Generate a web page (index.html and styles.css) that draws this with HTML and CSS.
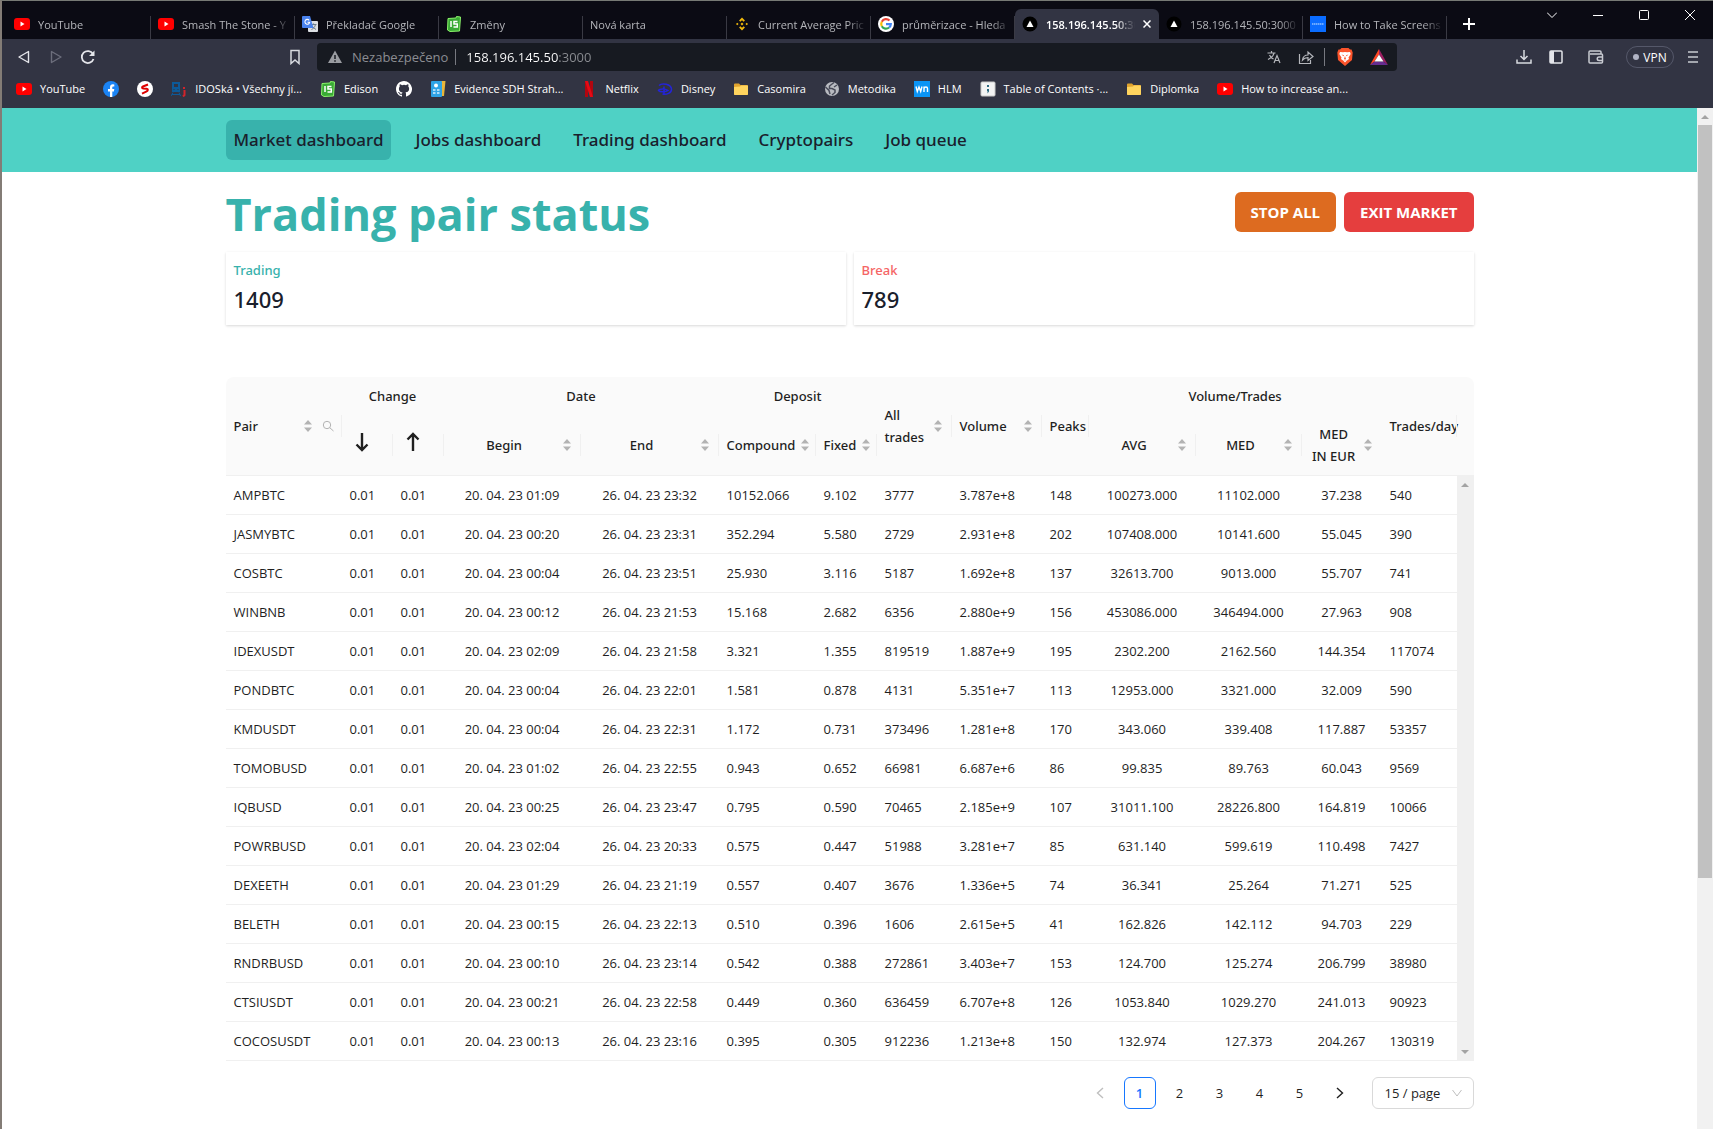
FILE: index.html
```html
<!DOCTYPE html>
<html lang="en">
<head>
<meta charset="utf-8">
<title>Trading pair status</title>
<link rel="stylesheet" href="styles.css">
</head>
<body>
<svg class="defs" aria-hidden="true">
  <symbol id="yt" viewBox="0 0 16 16"><rect x="0" y="2" width="16" height="12" rx="3" fill="#f00"/><path d="M6.500 5.500v5l4-2.500z" fill="#fff"/></symbol>
  <symbol id="edison" viewBox="0 0 16 16"><path d="M2 2.500 10 2l.5-1.500 4 .5-1 14L4 15.500 1.500 14z" fill="#3aaa35" stroke="#8bf36b"/><path d="M5 5v6M11.500 5.500H8v2.500h3.300v3H7.500" fill="none" stroke="#fff" stroke-width="1.500"/></symbol>
  <symbol id="vercel" viewBox="0 0 16 16"><circle cx="8" cy="8" r="7.500" fill="#000"/><path d="M8 4.500 11.500 11h-7z" fill="#fff"/></symbol>
  <symbol id="folder" viewBox="0 0 16 16"><path d="M1 3.500a1 1 0 0 1 1-1h4l1.500 1.500H14a1 1 0 0 1 1 1v8a1 1 0 0 1-1 1H2a1 1 0 0 1-1-1z" fill="#e0a32e"/><path d="M1 6 7 5.500 8 4.500h6.500L15 5v8a1 1 0 0 1-1 1H2a1 1 0 0 1-1-1z" fill="#ffd45e"/></symbol>
  <symbol id="sort" viewBox="0 0 12 12"><path d="M6 0 10 4.500H2zM2 7.500h8L6 12z" fill="#b3b3b3"/></symbol>
</svg>

<header class="browser">
  <div class="tabs">
    <button class="tab"><svg class="ico"><use href="#yt"/></svg><span>YouTube</span></button>
    <button class="tab"><svg class="ico"><use href="#yt"/></svg><span>Smash The Stone - Y</span></button>
    <button class="tab"><svg class="ico" viewBox="0 0 16 16"><rect x="6" y="5" width="10" height="11" rx="1" fill="#dcdfe4"/><path d="M8.500 8.500h6M11.500 7.500v1M13.500 8.500c-.5 2.500-2 4-4 5M10 10.500l4 3" fill="none" stroke="#6b7c8c"/><path d="M1 0h7l3.500 12H1a1 1 0 0 1-1-1V1a1 1 0 0 1 1-1z" fill="#4a83ee"/><path d="M7.200 4.300A2.400 2.400 0 1 0 7.700 6.200H5.500" fill="none" stroke="#fff" stroke-width="1.100"/></svg><span>Překladač Google</span></button>
    <button class="tab"><svg class="ico"><use href="#edison"/></svg><span>Změny</span></button>
    <button class="tab"><span>Nová karta</span></button>
    <button class="tab"><svg class="ico" viewBox="3 3 10 10"><path d="M8 3l2.300 2.300-1 1L8 5 6.700 6.300l-1-1zM8 13l2.300-2.300-1-1L8 11 6.700 9.700l-1 1zM4.300 7l1 1-1 1-1-1zM11.700 7l1 1-1 1-1-1zM8 6.800 9.200 8 8 9.200 6.800 8z" fill="#f0b90b" transform="translate(1.600 1.600) scale(.8)"/></svg><span>Current Average Pric</span></button>
    <button class="tab"><svg class="ico" viewBox="0 0 16 16"><circle cx="8" cy="8" r="8" fill="#fff"/><g fill="none" stroke-width="2.200"><path d="M11.500 4.600A4.800 4.800 0 0 0 3.800 5.700" stroke="#ea4335"/><path d="M3.800 5.700a4.800 4.800 0 0 0 0 4.600" stroke="#fbbc05"/><path d="M3.800 10.300a4.800 4.800 0 0 0 7.300 1.200" stroke="#34a853"/><path d="M11.100 11.500A4.500 4.500 0 0 0 12.800 8.200H8" stroke="#4285f4"/></g></svg><span>průměrizace - Hleda</span></button>
    <button class="tab active"><svg class="ico"><use href="#vercel"/></svg><span>158.196.145.50:30</span><svg class="x" viewBox="0 0 8 8"><path d="M.5.5l7 7M7.500.5l-7 7" stroke="#fff" stroke-width="1.500"/></svg></button>
    <button class="tab"><svg class="ico"><use href="#vercel"/></svg><span>158.196.145.50:3000</span></button>
    <button class="tab"><svg class="ico" viewBox="0 0 16 16"><path d="M0 0h16v16H0z" fill="#0a6cff"/><path d="M2 8h12" stroke="#8fbfff" stroke-width="1.500" stroke-dasharray="1.500 .5"/></svg><span>How to Take Screens</span></button>
    <button class="new-tab" aria-label="New tab"><svg viewBox="0 0 12 12"><path d="M6 0v12M0 6h12" stroke="#fff" stroke-width="2"/></svg></button>
    <div class="window">
      <button aria-label="Search tabs"><svg viewBox="0 0 10 10"><path d="M0 2.500l5 5 5-5" /></svg></button>
      <button aria-label="Minimize"><svg viewBox="0 0 10 10"><path d="M0 5.500h10"/></svg></button>
      <button aria-label="Maximize"><svg viewBox="0 0 10 10"><rect x=".5" y=".5" width="9" height="9" rx="1"/></svg></button>
      <button aria-label="Close"><svg viewBox="0 0 10 10"><path d="M0 0l10 10M10 0L0 10"/></svg></button>
    </div>
  </div>

  <div class="toolbar">
    <div class="history">
      <button aria-label="Back"><svg class="ico" viewBox="0 0 16 16"><path d="M12.500 2.500v11L3 8z" fill="none" stroke="#e4e5ea" stroke-width="1.400" stroke-linejoin="round"/></svg></button>
      <button aria-label="Forward"><svg class="ico" viewBox="0 0 16 16"><path d="M3.500 2.500v11L13 8z" fill="none" stroke="#6c6e7c" stroke-width="1.400" stroke-linejoin="round"/></svg></button>
      <button aria-label="Reload"><svg class="ico" viewBox="0 0 16 16"><path d="M13.500 10A6 6 0 1 1 13 5" fill="none" stroke="#e4e5ea" stroke-width="1.800"/><path d="M14.500 1.500v5.500H9z" fill="#e4e5ea"/></svg></button>
    </div>
    <button class="mark" aria-label="Bookmark"><svg class="ico" viewBox="0 0 16 16"><path d="M4 1.500h8v13l-4-3.500-4 3.500z" fill="none" stroke="#d8dae0" stroke-width="1.500"/></svg></button>
    <div class="address">
      <svg class="ico" viewBox="0 0 16 16"><path d="M8 1.500 15 14H1z" fill="#9a9ca1"/><path d="M8 6v4M8 11.200v1.500" stroke="#171a21" stroke-width="1.500"/></svg>
      <span class="insecure">Nezabezpečeno</span>
      <input class="url" aria-label="Address" value="158.196.145.50:3000">
      <button aria-label="Translate"><svg class="ico" viewBox="0 0 16 16"><path d="M1.500 4h8M5.500 2v2M8 4c-.5 3-3 5-6 6.500M3.500 6c1 2 2.500 3.200 4 4M8 14l3-7.500 3 7.500M9 11.500h4" fill="none" stroke="#b4b6bb" stroke-width="1.200"/></svg></button>
      <button aria-label="Share"><svg class="ico" viewBox="0 0 16 16"><path d="M1.500 5v9.500h11V11M4.500 11c.5-3.500 2.500-5 5.500-5V3l5 4.500-5 4V8.700c-2.500 0-4 .5-5.500 2.300z" fill="none" stroke="#b4b6bb" stroke-width="1.200"/></svg></button>
      <div class="shields">
        <button aria-label="Brave Shields"><svg viewBox="0 0 16 18"><path d="M4.500 0h7l1.500 1.500 1.500 0 1.200 3-.7 7.500L8 18l-7-6L.3 4.500l1.200-3H3z" fill="#fb542b"/><path d="M3 4l3 .3L8 4l2 .3L13 4l.7 2-2.200 3.500.5 1.500-2.500 1.800L8 14.500l-1.500-1.700L4 11l.5-1.500L2.300 6z" fill="#fff"/><path d="M4.500 6.500l2.500.8-.5 1zM11.500 6.500 9 7.300l.5 1zM8 8l-1 3 1 .5 1-.5zM6.500 12.200 8 11.700l1.500.5" fill="#fb542b"/></svg></button>
        <button aria-label="Rewards"><svg viewBox="0 0 18 16"><path d="M9 0v5.500L4.500 12.500 0 16z" fill="#ff4724"/><path d="M9 0v5.500l4.500 7L18 16z" fill="#9e1f63"/><path d="M0 16l4.500-3.500h9L18 16z" fill="#662d91"/><path d="M9 5.500l4.500 7h-9z" fill="#fff"/></svg></button>
      </div>
    </div>
    <div class="actions">
      <button aria-label="Downloads"><svg class="ico" viewBox="0 0 16 16"><path d="M8 1v9M4.500 7 8 10.500 11.500 7M1 10.500V14h14v-3.500" fill="none" stroke="#d8dae0" stroke-width="1.500"/></svg></button>
      <button aria-label="Sidebar"><svg class="ico" viewBox="0 0 16 16"><rect x="2" y="2" width="12" height="12" rx="1" fill="none" stroke="#e4e5ea" stroke-width="1.500"/><path d="M2 2h4v12H2z" fill="#e4e5ea"/></svg></button>
      <button class="wallet" aria-label="Wallet"><svg class="ico" viewBox="0 0 16 16"><path d="M13 5V3a1 1 0 0 0-1-1H2a1 1 0 0 0-1 1v10a1 1 0 0 0 1 1h11.500a1 1 0 0 0 1-1V6a1 1 0 0 0-1-1H2M15 8h-4a1.500 1.500 0 0 0 0 3.500h4" fill="none" stroke="#c9cbd2" stroke-width="1.500"/></svg></button>
      <button class="vpn"><i></i>VPN</button>
      <button aria-label="Menu"><svg class="ico" viewBox="0 0 16 16"><path d="M3 3h10M3 8h10M3 13h10" stroke="#c9cbd2" stroke-width="1.700"/></svg></button>
    </div>
  </div>

  <nav class="bookmarks" aria-label="Bookmarks">
    <a href="#"><svg class="ico"><use href="#yt"/></svg>YouTube</a>
    <a href="#" aria-label="Facebook"><svg class="ico" viewBox="0 0 16 16"><circle cx="8" cy="8" r="8" fill="#1b84f5"/><path d="M7 16v-5.500H5V8h2V6.300C7 4.300 8.200 3.300 9.800 3.300l1.500.1v2.100h-.9c-.9 0-1.100.5-1.100 1V8h2l-.4 2.500H9.300V16z" fill="#fff"/></svg></a>
    <a href="#" aria-label="Seznam"><svg class="ico" viewBox="0 0 16 16"><circle cx="8" cy="8" r="8" fill="#fff"/><path d="M11 3.500 6 5.500c-1.500.8-1 2 .2 2l3.300.2c2 .3 1.700 2-.3 3L5 12.700" fill="none" stroke="#d00" stroke-width="2"/></svg></a>
    <a href="#"><svg class="ico" viewBox="0 0 16 16"><path d="M1 1h8v10H1zM3 3v3h4V3zM2.500 8v1h1V8zM6.500 8v1h1V8z" fill="#0d5a99" fill-rule="evenodd"/><path d="M2 11.500 0 15M8 11.500l1.500 3.500M1 13.500h8" stroke="#0d5a99"/><path d="M13 6v2M13.500 9v5l-1.500 1.500" stroke="#d2232a" stroke-width="2" fill="none"/></svg>IDOSká • Všechny jí...</a>
    <a href="#"><svg class="ico"><use href="#edison"/></svg>Edison</a>
    <a href="#" aria-label="GitHub"><svg class="ico" viewBox="0 0 16 16"><path fill="#fff" d="M8 0C3.580 0 0 3.580 0 8c0 3.540 2.290 6.530 5.470 7.590.4.070.55-.17.55-.38 0-.19-.01-.82-.01-1.490-2.010.37-2.530-.49-2.690-.94-.09-.23-.48-.94-.82-1.130-.28-.15-.68-.52-.01-.53.63-.01 1.080.58 1.230.82.72 1.210 1.870.87 2.330.66.07-.52.28-.87.51-1.070-1.780-.2-3.640-.89-3.640-3.950 0-.87.31-1.590.82-2.150-.08-.2-.36-1.020.08-2.120 0 0 .67-.21 2.200.82a7.600 7.600 0 0 1 4 0c1.530-1.040 2.200-.82 2.200-.82.44 1.100.16 1.920.08 2.120.51.56.82 1.270.82 2.150 0 3.070-1.870 3.750-3.650 3.950.29.25.54.73.54 1.480 0 1.070-.01 1.930-.01 2.200 0 .21.150.46.55.38A8 8 0 0 0 8 0z"/></svg></a>
    <a href="#"><svg class="ico" viewBox="0 0 16 16"><path d="M11 0h4.500L14 15h-3z" fill="#e8b63a"/><rect x="1" y="0" width="11" height="16" rx="1" fill="#2ea3e6"/><circle cx="6" cy="4.500" r="2" fill="#fff"/><path d="M3 9h2.500M7 9h2.500M3 12h2.500M7 12h2.500" stroke="#d5efff" stroke-width="1.500"/></svg>Evidence SDH Strah...</a>
    <a href="#"><svg class="ico" viewBox="0 0 16 16"><path d="M4 0h3v16H4zM9 0h3v16H9z" fill="#b1060f"/><path d="M4 0h3l5 16H9z" fill="#e50914"/></svg>Netflix</a>
    <a href="#"><svg class="ico" viewBox="0 0 16 16"><path d="M2 4.500C5 1.500 14 3 14.500 8c.3 4-5 6-9 5M7 5.500v8M1.500 9.500c1-2 7-2 9.500 0-2 1.500-8 2-9.500 0z" fill="none" stroke="#2424d8" stroke-width="1.500"/></svg>Disney</a>
    <a href="#"><svg class="ico"><use href="#folder"/></svg>Casomira</a>
    <a href="#"><svg class="ico" viewBox="0 0 16 16"><circle cx="8" cy="8" r="7" fill="#b9bbc1"/><path d="M10 1.500 5.500 5v2.500H8l3 1.500v2.500L8 14M1.500 6 5 9.500 6 13M13 4l-3 2" fill="none" stroke="#4a4c5a" stroke-width="1.500"/></svg>Metodika</a>
    <a href="#"><svg class="ico" viewBox="0 0 16 16"><path d="M0 0h16v16H0z" fill="#0b94f5"/><path d="M2 5.500 3.300 10.500 5 6l1.700 4.500L8 5.500M10 11V5.500M10 7.500c.5-2 3.500-2 3.500 0V11" fill="none" stroke="#fff" stroke-width="1.400"/></svg>HLM</a>
    <a href="#"><svg class="ico" viewBox="0 0 16 16"><rect x="1" y="1" width="14" height="14" rx="1" fill="#f3f3f3" stroke="#c9c9c9"/><path d="M7 4h2v2H7zM7 8h2v2.500L7.500 12.500V10H7z" fill="#2c6a80"/></svg>Table of Contents ·...</a>
    <a href="#"><svg class="ico"><use href="#folder"/></svg>Diplomka</a>
    <a href="#"><svg class="ico"><use href="#yt"/></svg>How to increase an...</a>
  </nav>
</header>

<div class="viewport">
  <div class="page">
    <nav class="site-nav">
      <div class="container">
        <a class="current" href="#">Market dashboard</a>
        <a href="#">Jobs dashboard</a>
        <a href="#">Trading dashboard</a>
        <a href="#">Cryptopairs</a>
        <a href="#">Job queue</a>
      </div>
    </nav>
    <main class="container">
      <div class="title-row">
        <h1>Trading pair status</h1>
        <div class="buttons">
          <button class="stop">STOP ALL</button>
          <button class="exit">EXIT MARKET</button>
        </div>
      </div>
      <dl class="stats">
        <div class="stat trading"><dt>Trading</dt><dd>1409</dd></div>
        <div class="stat break"><dt>Break</dt><dd>789</dd></div>
      </dl>

      <div class="table-wrap">
        <table>
          <colgroup><col class="c116"><col class="c51"><col class="c51"><col class="c137"><col class="c138"><col class="c97"><col class="c61"><col class="c75"><col class="c90"><col class="c47"><col class="c107"><col class="c106"><col class="c80"><col></colgroup>
          <thead>
            <tr>
              <th rowspan="2" class="sep"><div class="head"><span>Pair</span><svg class="sort"><use href="#sort"/></svg><button class="search" aria-label="Search pair"><svg viewBox="0 0 12 12"><circle cx="5" cy="5" r="3.700"/><path d="M7.700 7.700 11.500 11"/></svg></button></div></th>
              <th colspan="2">Change</th>
              <th colspan="2">Date</th>
              <th colspan="2">Deposit</th>
              <th rowspan="2" class="sep"><div class="head"><span>All trades</span><svg class="sort"><use href="#sort"/></svg></div></th>
              <th rowspan="2" class="sep"><div class="head"><span>Volume</span><svg class="sort"><use href="#sort"/></svg></div></th>
              <th rowspan="2" class="sep"><div class="head"><span>Peaks</span></div></th>
              <th colspan="3">Volume/Trades</th>
              <th rowspan="2" class="sep"><div class="head"><span>Trades/day</span></div></th>
            </tr>
            <tr class="sub">
              <th class="sep"><div class="head"><svg class="arrow" role="img" aria-label="Down" viewBox="0 0 24 24"><path d="M12 3v17M6.500 14.500 12 20l5.500-5.500"/></svg></div></th>
              <th class="sep"><div class="head"><svg class="arrow" role="img" aria-label="Up" viewBox="0 0 24 24"><path d="M12 21V4M6.500 9.500 12 4l5.500 5.500"/></svg></div></th>
              <th class="sep"><div class="head mid"><span>Begin</span><svg class="sort"><use href="#sort"/></svg></div></th>
              <th class="sep"><div class="head mid"><span>End</span><svg class="sort"><use href="#sort"/></svg></div></th>
              <th class="sep"><div class="head"><span>Compound</span><svg class="sort"><use href="#sort"/></svg></div></th>
              <th class="sep"><div class="head"><span>Fixed</span><svg class="sort"><use href="#sort"/></svg></div></th>
              <th class="sep"><div class="head mid"><span>AVG</span><svg class="sort"><use href="#sort"/></svg></div></th>
              <th class="sep"><div class="head mid"><span>MED</span><svg class="sort"><use href="#sort"/></svg></div></th>
              <th><div class="head mid"><span>MED IN&nbsp;EUR</span><svg class="sort"><use href="#sort"/></svg></div></th>
            </tr>
          </thead>
          <tbody>
            <tr><td>AMPBTC</td><td>0.01</td><td>0.01</td><td>20. 04. 23 01:09</td><td>26. 04. 23 23:32</td><td>10152.066</td><td>9.102</td><td>3777</td><td>3.787e+8</td><td>148</td><td>100273.000</td><td>11102.000</td><td>37.238</td><td>540</td></tr>
            <tr><td>JASMYBTC</td><td>0.01</td><td>0.01</td><td>20. 04. 23 00:20</td><td>26. 04. 23 23:31</td><td>352.294</td><td>5.580</td><td>2729</td><td>2.931e+8</td><td>202</td><td>107408.000</td><td>10141.600</td><td>55.045</td><td>390</td></tr>
            <tr><td>COSBTC</td><td>0.01</td><td>0.01</td><td>20. 04. 23 00:04</td><td>26. 04. 23 23:51</td><td>25.930</td><td>3.116</td><td>5187</td><td>1.692e+8</td><td>137</td><td>32613.700</td><td>9013.000</td><td>55.707</td><td>741</td></tr>
            <tr><td>WINBNB</td><td>0.01</td><td>0.01</td><td>20. 04. 23 00:12</td><td>26. 04. 23 21:53</td><td>15.168</td><td>2.682</td><td>6356</td><td>2.880e+9</td><td>156</td><td>453086.000</td><td>346494.000</td><td>27.963</td><td>908</td></tr>
            <tr><td>IDEXUSDT</td><td>0.01</td><td>0.01</td><td>20. 04. 23 02:09</td><td>26. 04. 23 21:58</td><td>3.321</td><td>1.355</td><td>819519</td><td>1.887e+9</td><td>195</td><td>2302.200</td><td>2162.560</td><td>144.354</td><td>117074</td></tr>
            <tr><td>PONDBTC</td><td>0.01</td><td>0.01</td><td>20. 04. 23 00:04</td><td>26. 04. 23 22:01</td><td>1.581</td><td>0.878</td><td>4131</td><td>5.351e+7</td><td>113</td><td>12953.000</td><td>3321.000</td><td>32.009</td><td>590</td></tr>
            <tr><td>KMDUSDT</td><td>0.01</td><td>0.01</td><td>20. 04. 23 00:04</td><td>26. 04. 23 22:31</td><td>1.172</td><td>0.731</td><td>373496</td><td>1.281e+8</td><td>170</td><td>343.060</td><td>339.408</td><td>117.887</td><td>53357</td></tr>
            <tr><td>TOMOBUSD</td><td>0.01</td><td>0.01</td><td>20. 04. 23 01:02</td><td>26. 04. 23 22:55</td><td>0.943</td><td>0.652</td><td>66981</td><td>6.687e+6</td><td>86</td><td>99.835</td><td>89.763</td><td>60.043</td><td>9569</td></tr>
            <tr><td>IQBUSD</td><td>0.01</td><td>0.01</td><td>20. 04. 23 00:25</td><td>26. 04. 23 23:47</td><td>0.795</td><td>0.590</td><td>70465</td><td>2.185e+9</td><td>107</td><td>31011.100</td><td>28226.800</td><td>164.819</td><td>10066</td></tr>
            <tr><td>POWRBUSD</td><td>0.01</td><td>0.01</td><td>20. 04. 23 02:04</td><td>26. 04. 23 20:33</td><td>0.575</td><td>0.447</td><td>51988</td><td>3.281e+7</td><td>85</td><td>631.140</td><td>599.619</td><td>110.498</td><td>7427</td></tr>
            <tr><td>DEXEETH</td><td>0.01</td><td>0.01</td><td>20. 04. 23 01:29</td><td>26. 04. 23 21:19</td><td>0.557</td><td>0.407</td><td>3676</td><td>1.336e+5</td><td>74</td><td>36.341</td><td>25.264</td><td>71.271</td><td>525</td></tr>
            <tr><td>BELETH</td><td>0.01</td><td>0.01</td><td>20. 04. 23 00:15</td><td>26. 04. 23 22:13</td><td>0.510</td><td>0.396</td><td>1606</td><td>2.615e+5</td><td>41</td><td>162.826</td><td>142.112</td><td>94.703</td><td>229</td></tr>
            <tr><td>RNDRBUSD</td><td>0.01</td><td>0.01</td><td>20. 04. 23 00:10</td><td>26. 04. 23 23:14</td><td>0.542</td><td>0.388</td><td>272861</td><td>3.403e+7</td><td>153</td><td>124.700</td><td>125.274</td><td>206.799</td><td>38980</td></tr>
            <tr><td>CTSIUSDT</td><td>0.01</td><td>0.01</td><td>20. 04. 23 00:21</td><td>26. 04. 23 22:58</td><td>0.449</td><td>0.360</td><td>636459</td><td>6.707e+8</td><td>126</td><td>1053.840</td><td>1029.270</td><td>241.013</td><td>90923</td></tr>
            <tr><td>COCOSUSDT</td><td>0.01</td><td>0.01</td><td>20. 04. 23 00:13</td><td>26. 04. 23 23:16</td><td>0.395</td><td>0.305</td><td>912236</td><td>1.213e+8</td><td>150</td><td>132.974</td><td>127.373</td><td>204.267</td><td>130319</td></tr>
          </tbody>
        </table>
        <div class="gutter" aria-hidden="true">
          <div class="gutter-head"></div>
          <div class="track"><svg viewBox="0 0 8 4"><path d="M4 0l4 4H0z"/></svg><svg viewBox="0 0 8 4"><path d="M0 0h8L4 4z"/></svg></div>
        </div>
      </div>

      <div class="pagination">
        <button class="page-btn" disabled aria-label="Previous page"><svg viewBox="0 0 8 12"><path d="M7 1 1.500 6 7 11"/></svg></button>
        <button class="page-btn selected">1</button>
        <button class="page-btn">2</button>
        <button class="page-btn">3</button>
        <button class="page-btn">4</button>
        <button class="page-btn">5</button>
        <button class="page-btn" aria-label="Next page"><svg viewBox="0 0 8 12"><path d="M1 1l5.500 5L1 11"/></svg></button>
        <div class="size">
          <select aria-label="Rows per page"><option>15 / page</option><option>30 / page</option><option>50 / page</option></select>
          <svg viewBox="0 0 10 8"><path d="M.5 1 5 7 9.500 1"/></svg>
        </div>
      </div>
    </main>
  </div>
  <div class="scrollbar" aria-hidden="true"><svg viewBox="0 0 8 4"><path d="M4 0l4 4H0z"/></svg><div class="rail"><div class="thumb"></div></div></div>
</div>
</body>
</html>
```
FILE: styles.css
```css
* { box-sizing: border-box; }

body {
  margin: 0;
  min-height: 100vh;
  display: flex;
  flex-direction: column;
  border-top: 1px solid #777a75;
  border-left: 2px solid #837c76;
  font-family: "Open Sans", "Noto Sans", sans-serif;
  font-size: 13px;
  color: #1f1f1f;
  background: #fff;
}

button { margin: 0; padding: 0; border: 0; background: none; font: inherit; color: inherit; cursor: pointer; }
a { color: inherit; text-decoration: none; }
svg { display: block; flex: none; }
.defs { position: absolute; width: 0; height: 0; }
.ico { width: 16px; height: 16px; }

/* Browser window */
.browser { background: #323443; color: #fff; font-size: 12px; }

.tabs {
  display: flex;
  align-items: flex-end;
  height: 38px;
  padding-left: 5px;
  background: #0b0b14;
}
.tab {
  display: flex;
  align-items: center;
  flex: 0 1 144px;
  min-width: 0;
  height: 30px;
  padding: 0 4px 0 7px;
  gap: 8px;
  color: #b4b5ba;
  font-size: 11px;
  background: linear-gradient(#3a3a44, #3a3a44) right bottom / 1px 23px no-repeat;
}
.tab span {
  flex: 1;
  min-width: 0;
  overflow: hidden;
  white-space: nowrap;
  text-align: left;
  -webkit-mask-image: linear-gradient(90deg, #000 calc(100% - 20px), transparent);
  mask-image: linear-gradient(90deg, #000 calc(100% - 20px), transparent);
}
.tab.active { background: #323443; color: #fff; font-weight: 600; border-radius: 6px 6px 0 0; padding-right: 8px; }
.x { width: 8px; height: 8px; }
.new-tab { display: grid; place-items: center; width: 44px; height: 30px; }
.new-tab svg { width: 12px; height: 12px; }
.window { display: flex; align-self: flex-start; margin-left: auto; }
.window button { display: grid; place-items: center; width: 46px; height: 28px; }
.window svg { width: 10px; height: 10px; fill: none; stroke: #fff; }

.toolbar { display: flex; align-items: center; height: 36px; }
.history { display: flex; gap: 16px; width: 279px; padding-left: 14px; }
.mark { padding: 0 6px; margin-right: 8px; }
.address {
  display: flex;
  align-items: center;
  flex: 0 1 1080px;
  height: 28px;
  padding: 0 9px 0 10px;
  border-radius: 4px;
  background: #171a21;
  font-size: 13px;
}
.insecure { margin-left: 9px; padding-right: 7px; border-right: 1px solid #777980; color: #8b8d92; line-height: 16px; }
.url {
  flex: 1;
  min-width: 0;
  margin: 0;
  padding: 0 0 0 10px;
  border: 0;
  outline: 0;
  font: inherit;
  color: transparent;
  caret-color: #fff;
  background: linear-gradient(90deg, #fff 102px, #8b8d92 102px);
  -webkit-background-clip: text;
  background-clip: text;
}
.address > button { margin-right: 16px; }
.shields { display: flex; align-items: center; gap: 16px; margin-left: -6px; padding-left: 11px; border-left: 1px solid #777980; }
.shields svg { width: 18px; height: 18px; }
.actions { display: flex; align-items: center; gap: 16px; margin-left: auto; padding-right: 12px; }
.wallet { margin-left: 8px; }
.vpn {
  display: flex;
  align-items: center;
  justify-content: center;
  gap: 4px;
  width: 48px;
  height: 22px;
  margin: 0 -5px 0 6px;
  border: 1px solid #55586a;
  border-radius: 11px;
  font-size: 12px;
}
.vpn i { width: 6px; height: 6px; border-radius: 3px; background: #b0b3c4; }

.bookmarks { display: flex; align-items: center; gap: 18px; height: 33px; padding: 0 14px 6px; font-size: 11px; white-space: nowrap; overflow: hidden; }
.bookmarks a { display: flex; align-items: center; gap: 8px; }

/* Site */
.viewport { display: flex; flex: 1; }
.page { flex: 1; min-width: 0; }
.container { width: 100%; max-width: 1248px; margin: 0 auto; }

.site-nav { background: #4fd1c5; padding: 12px 0; }
.site-nav .container { display: flex; gap: 16px; }
.site-nav a { padding: 0 8px; border-radius: 6px; font-family: "Noto Sans", sans-serif; font-size: 17px; font-weight: 500; line-height: 40px; color: #1a202c; }
.site-nav .current { background: #38b2ac; }

.title-row { display: flex; align-items: center; justify-content: space-between; height: 80px; }
h1 { margin: 0; padding-top: 4px; font-size: 45px; line-height: 58px; font-weight: 700; color: #38b2ac; }
.buttons { display: flex; gap: 8px; }
.buttons button { height: 40px; padding: 0 16px; border-radius: 6px; color: #fff; font-size: 15px; font-weight: 700; }
.stop { background: #dd6b20; }
.exit { background: #e53e3e; }

.stats { display: grid; grid-template-columns: 1fr 1fr; gap: 8px; margin: 0 0 52px; }
.stat { padding: 8px; box-shadow: 0 1px 3px rgba(0, 0, 0, .1), 0 1px 2px rgba(0, 0, 0, .06); font-family: "Noto Sans", sans-serif; font-weight: 500; }
.stat dt { font-size: 13px; line-height: 21px; }
.stat dd { margin: 0; font-size: 22px; line-height: 36px; color: #1a202c; }
.trading dt { color: #38b2ac; }
.break dt { color: #f56565; }

.table-wrap { display: flex; border-radius: 8px 8px 0 0; overflow: hidden; }
table { position: relative; z-index: 1; flex: 1; min-width: 0; width: 100%; table-layout: fixed; border-collapse: separate; border-spacing: 0; line-height: 22px; }
.c116 { width: 116px; } .c51 { width: 51px; } .c137 { width: 137px; } .c138 { width: 138px; }
.c97 { width: 97px; } .c61 { width: 61px; } .c75 { width: 75px; } .c90 { width: 90px; } .c47 { width: 47px; }
.c107 { width: 107px; } .c106 { width: 106px; } .c80 { width: 80px; }
th { position: relative; height: 38px; padding: 8px; background: #fafafa; font-family: "Noto Sans", sans-serif; font-weight: 500; }
.sub th { height: 61px; }
.sub th, th[rowspan] { border-bottom: 1px solid #f0f0f0; }
.sep::after { content: ""; position: absolute; right: 0; top: calc(50% - 11px); width: 1px; height: 22px; background: #f0f0f0; }
.head { display: flex; align-items: center; text-align: left; }
.head span { flex: 1; }
.head.mid { text-align: center; }
.sort { width: 12px; height: 12px; margin-left: 4px; }
.search { margin: 0 -4px 0 4px; padding: 0 4px; }
.search svg { width: 12px; height: 12px; fill: none; stroke: #b3b3b3; }
.arrow { width: 24px; height: 24px; margin-bottom: 7px; fill: none; stroke: #1f1f1f; stroke-width: 2.4; }
td { height: 39px; padding: 8px; border-bottom: 1px solid #f0f0f0; white-space: nowrap; }
td:nth-child(4), td:nth-child(5), td:nth-child(11), td:nth-child(12), td:nth-child(13) { text-align: center; }

.gutter { display: flex; flex-direction: column; width: 17px; }
.gutter-head { height: 99px; background: #fafafa; border-bottom: 1px solid #f0f0f0; }
.track { flex: 1; display: flex; flex-direction: column; justify-content: space-between; align-items: center; padding: 7px 0; background: #f0f0f0; }
.track svg, .scrollbar svg { width: 8px; height: 4px; fill: #a3a3a3; }

.pagination { display: flex; justify-content: flex-end; gap: 8px; margin: 16px 0; }
.page-btn { display: grid; place-items: center; width: 32px; height: 32px; border-radius: 6px; }
.page-btn svg { width: 8px; height: 12px; fill: none; stroke: #1f1f1f; stroke-width: 1.4; }
.page-btn:disabled svg { stroke: #bfbfbf; }
.selected { border: 1px solid #1677ff; color: #1677ff; font-weight: 600; }
.size { position: relative; margin-left: 8px; }
.size select {
  width: 102px;
  height: 32px;
  padding: 0 12px;
  border: 1px solid #d9d9d9;
  border-radius: 6px;
  appearance: none;
  background: #fff;
  font: inherit;
  color: inherit;
}
.size svg { position: absolute; right: 12px; top: 12px; width: 10px; height: 8px; fill: none; stroke: #bfbfbf; pointer-events: none; }

.scrollbar { display: flex; flex-direction: column; align-items: center; width: 16px; padding-top: 7px; background: #f1f1f1; }
.rail { flex: 1; width: 14px; margin-top: 6px; }
.thumb { height: 75%; background: #c1c1c1; }
```
